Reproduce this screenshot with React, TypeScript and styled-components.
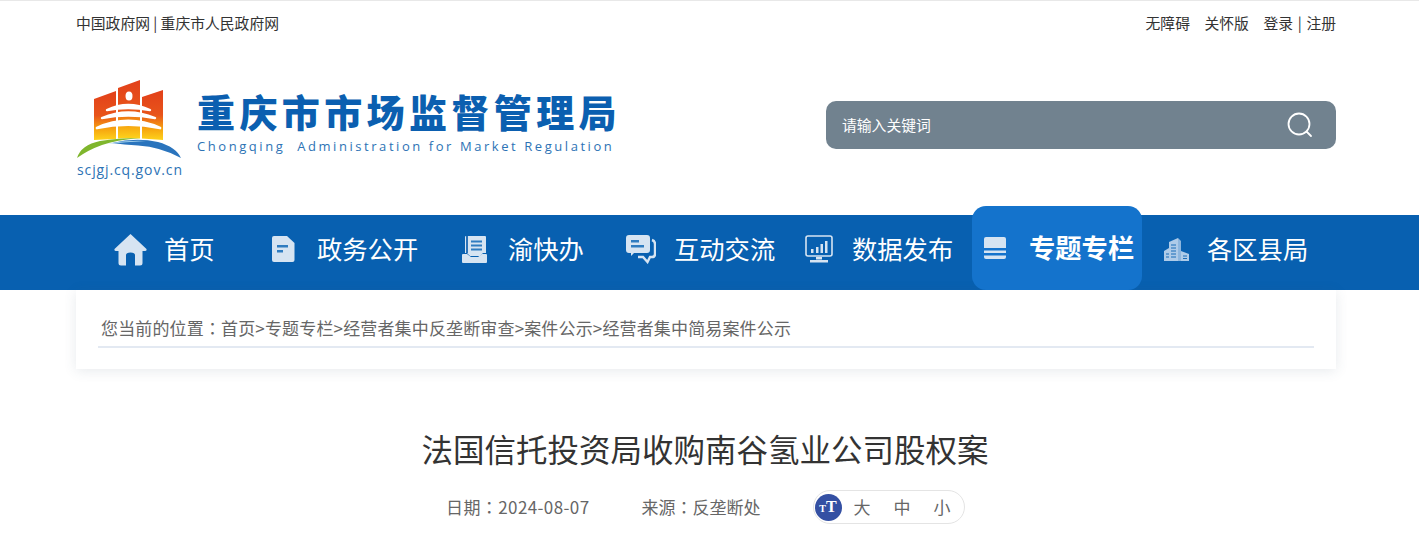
import React from "react";
import styled, { createGlobalStyle } from "styled-components";

const FONT = `"Noto Sans CJK SC", "Noto Sans", "Liberation Sans", sans-serif`;
const ICON = "#d6e4f2";

const GlobalStyle = createGlobalStyle`
  html, body {
    margin: 0;
    padding: 0;
    background: #fff;
    font-family: ${FONT};
    overflow: hidden;
  }
  * { box-sizing: border-box; }
`;

const HomeIcon = () => (
  <svg width="33" height="33" viewBox="0 0 33 33">
    <path
      d="M16.5 1 L32.5 16 Q33 18 31 18 H28.5 V30 Q28.5 32.5 26 32.5 H21 V22 Q21 19.5 16.5 19.5 Q12 19.5 12 22 V32.5 H7 Q4.5 32.5 4.5 30 V18 H2 Q0 18 .5 16 Z"
      fill={ICON}
    />
  </svg>
);

const DocIcon = () => (
  <svg width="23" height="26" viewBox="0 0 23 26">
    <path d="M2 0 H15 L22.5 7 V24 Q22.5 26 20.500 26 H2 Q0 26 0 24 V2 Q0 0 2 0 Z" fill={ICON} />
    <path d="M5 9 H16 V11.500 H5 Z M5 14 H11 V16.500 H5 Z" fill="#2f7cc0" />
  </svg>
);

const ServiceIcon = () => (
  <svg width="25" height="27" viewBox="0 0 25 27">
    <path d="M3 1 Q3 0 4 0 H23 Q24 0 24 1 V17 H21 L18 20 H8 L5 17 H3 Z" fill={ICON} />
    <path d="M6 0 V17 H4 V0 Z" fill="#2a72b8" />
    <path d="M9 4.500 H20 V6.500 H9 Z M9 8.500 H20 V10.500 H9 Z M9 12.500 H20 V14.500 H9 Z" fill="#2f7cc0" />
    <path d="M1 18 H5 L9 21 H16 L20 18 H24 Q25 18 25 19 V26 Q25 27 24 27 H1 Q0 27 0 26 V19 Q0 18 1 18 Z" fill={ICON} />
  </svg>
);

const ChatIcon = () => (
  <svg width="30" height="29" viewBox="0 0 30 29">
    <path d="M3 0 H21 Q24 0 24 3 V15 Q24 18 21 18 H8 L5 21 V18 H3 Q0 18 0 15 V3 Q0 0 3 0 Z" fill={ICON} />
    <path d="M5 5 H13 V7.500 H5 Z M5 10 H18 V12.500 H5 Z" fill="#2f7cc0" />
    <path
      d="M26 5 Q29 6 29 9 V19 Q29 22 26 22 H24 L21.500 27 L17 22 H12"
      fill="none"
      stroke={ICON}
      strokeWidth="2.400"
    />
  </svg>
);

const ChartIcon = () => (
  <svg width="28" height="28" viewBox="0 0 28 28">
    <rect x="1" y="1" width="26" height="20" rx="2" fill="none" stroke={ICON} strokeWidth="1.600" />
    <path d="M6 14 H8.500 V18 H6 Z M11 12 H13.500 V18 H11 Z M15.500 9 H18 V18 H15.500 Z M20 6 H22.500 V18 H20 Z" fill={ICON} />
    <path d="M11 22 H17 V24.500 H11 Z M5 25 H23 V27.500 H5 Z" fill={ICON} />
  </svg>
);

const StackIcon = () => (
  <svg width="22" height="22" viewBox="0 0 22 22">
    <path d="M2 0 H20 Q22 0 22 2 V11 H0 V2 Q0 0 2 0 Z" fill={ICON} />
    <path d="M0 13.500 H22 V16 H0 Z" fill={ICON} />
    <path d="M0 18.500 H22 V20 Q22 22 20 22 H2 Q0 22 0 20 Z" fill={ICON} />
  </svg>
);

const BuildingIcon = () => (
  <svg width="25" height="23" viewBox="0 0 25 23">
    <path d="M0 23 V13 L5 10 V4 L14 0 V23 Z" fill="#aecbe8" />
    <path d="M14 0 L17 3 V23 H14 Z" fill="#8db6de" />
    <path d="M17 13 L25 16 V23 H17 Z" fill="#aecbe8" />
    <path d="M7 7 H12 M7 10 H12 M7 13 H12 M7 16 H12 M7 19 H12 M2 16 H5 M2 19 H5 M19 18 H23 M19 20.500 H23" stroke="#0a62b2" strokeWidth=".9" />
  </svg>
);

const Emblem = () => (
  <svg width="107" height="80" viewBox="0 0 107 80">
    <defs>
      <linearGradient id="wall" x1="0" y1="0" x2="0" y2="1">
        <stop offset="0" stopColor="#e2401a" />
        <stop offset=".5" stopColor="#e8541a" />
        <stop offset=".78" stopColor="#f7a50f" />
        <stop offset="1" stopColor="#fdd31c" />
      </linearGradient>
    </defs>
    <path d="M18 19 L40 11 V59 Q28 59.500 18 60 Z" fill="url(#wall)" />
    <path d="M42 8 L64 0 V58.500 Q53 58 42 58.500 Z" fill="url(#wall)" />
    <path d="M66 17 L87 10 V60 Q76 59 66 58.500 Z" fill="url(#wall)" />
    <ellipse cx="53" cy="16" rx="3.500" ry="4.500" fill="#fff" />
    <path d="M31 30 Q52 20 74 30 Q52 26 31 30 Z" fill="#fff" stroke="#fff" strokeWidth="2.400" strokeLinejoin="round" />
    <path d="M26 38 Q52 27 79 38 Q52 33 26 38 Z" fill="#fff" stroke="#fff" strokeWidth="2.400" strokeLinejoin="round" />
    <path d="M21 48 Q52 34 84 48 Q52 41 21 48 Z" fill="#fff" stroke="#fff" strokeWidth="2.800" strokeLinejoin="round" />
    <path d="M1 78 Q5 65 24 61 Q42 58 64 58 Q40 60 26 65 Q12 70 1 78 Z" fill="#7fb62d" />
    <path d="M36 63 Q60 57 82 62 Q100 67 105 78 Q85 67 62 65.500 Q48 64.500 36 63 Z" fill="#2a74bd" />
    <path d="M30 64 Q50 60 70 61 Q50 62 30 64 Z" fill="#a9d6ee" />
  </svg>
);

const SearchIcon = () => (
  <svg width="26" height="26" viewBox="0 0 26 26" fill="none" stroke="#fff" strokeWidth="1.800">
    <circle cx="12" cy="12" r="10.500" />
    <path d="M19.500 19.500 L24 24" strokeLinecap="round" />
  </svg>
);

const navItems = [
  { label: "首页", icon: <HomeIcon />, width: 158, gap: 17 },
  { label: "政务公开", icon: <DocIcon />, width: 190, gap: 22 },
  { label: "渝快办", icon: <ServiceIcon />, width: 164, gap: 21 },
  { label: "互动交流", icon: <ChatIcon />, width: 179, gap: 18 },
  { label: "数据发布", icon: <ChartIcon />, width: 167, gap: 19 },
  { label: "专题专栏", icon: <StackIcon />, width: 170, gap: 23, active: true },
  { label: "各区县局", icon: <BuildingIcon />, width: 170, gap: 18 },
];

export default function App() {
  return (
    <Page>
      <GlobalStyle />
      <Container>
        <TopBar>
          <span>中国政府网 | 重庆市人民政府网</span>
          <TopLinks>
            <span>无障碍</span>
            <span>关怀版</span>
            <LoginLink>登录 | 注册</LoginLink>
          </TopLinks>
        </TopBar>
        <Header>
          <Logo>
            <EmblemBox>
              <Emblem />
              <Domain>scjgj.cq.gov.cn</Domain>
            </EmblemBox>
            <LogoName>
              <LogoTitle>重庆市市场监督管理局</LogoTitle>
              <LogoEnglish>Chongqing&nbsp; Administration for Market Regulation</LogoEnglish>
            </LogoName>
          </Logo>
          <SearchBox>
            <SearchHint>请输入关键词</SearchHint>
            <SearchIcon />
          </SearchBox>
        </Header>
      </Container>
      <Nav>
        <NavInner>
          {navItems.map((item) => (
            <NavItem key={item.label} $width={item.width} $gap={item.gap} $active={item.active}>
              <NavIconBox>{item.icon}</NavIconBox>
              <span>{item.label}</span>
            </NavItem>
          ))}
        </NavInner>
      </Nav>
      <Container>
        <CrumbCard>
          <CrumbLine>
            您当前的位置<Colon>：</Colon>首页&gt;专题专栏&gt;经营者集中反垄断审查&gt;案件公示&gt;经营者集中简易案件公示
          </CrumbLine>
        </CrumbCard>
        <Title>法国信托投资局收购南谷氢业公司股权案</Title>
        <Meta>
          <MetaDate>日期<Colon>：</Colon>2024-08-07</MetaDate>
          <MetaSource>来源<Colon>：</Colon>反垄断处</MetaSource>
          <SizePill>
            <SizeBadge>
              <SmallT>T</SmallT>
              <BigT>T</BigT>
            </SizeBadge>
            <SizeOption>大</SizeOption>
            <SizeOption>中</SizeOption>
            <SizeOption>小</SizeOption>
          </SizePill>
        </Meta>
      </Container>
    </Page>
  );
}

const Page = styled.div`
  width: 100%;
  min-height: 542px;
  border-top: 1px solid #e8e8e8;
`;

const Container = styled.div`
  width: 1260px;
  margin-left: 76px;
`;

const TopBar = styled.div`
  height: 42px;
  display: flex;
  justify-content: space-between;
  align-items: center;
  font-size: 14.8px;
  color: #333;
`;

const TopLinks = styled.div`
  display: flex;
  gap: 14.5px;
`;

const LoginLink = styled.span`
  word-spacing: 1.4px;
`;

const Header = styled.div`
  height: 172px;
  display: flex;
  justify-content: space-between;
  align-items: flex-start;
`;

const Logo = styled.div`
  display: flex;
  align-items: flex-start;
  gap: 14px;
  padding-top: 37px;
`;

const EmblemBox = styled.div`
  width: 107px;
  display: flex;
  flex-direction: column;
`;

const Domain = styled.div`
  font-family: "Open Sans", "Liberation Sans", sans-serif;
  font-size: 14px;
  line-height: 18px;
  letter-spacing: 0.88px;
  color: #2d73b5;
  margin-top: 1px;
  margin-left: 1px;
  white-space: nowrap;
`;

const LogoName = styled.div`
  padding-top: 11px;
`;

const LogoTitle = styled.div`
  font-size: 38px;
  line-height: 40px;
  font-weight: 900;
  letter-spacing: 4.4px;
  color: #0b5fb0;
  white-space: nowrap;
`;

const LogoEnglish = styled.div`
  font-family: "Open Sans", "Liberation Sans", sans-serif;
  font-size: 13px;
  line-height: 18px;
  letter-spacing: 2.56px;
  color: #2d73b5;
  margin-top: 6px;
  white-space: nowrap;
`;

const SearchBox = styled.div`
  width: 510px;
  height: 48px;
  margin-top: 58px;
  padding: 0 23px 0 16px;
  display: flex;
  justify-content: space-between;
  align-items: center;
  background: #71828f;
  border-radius: 10px;
`;

const SearchHint = styled.span`
  font-size: 14.8px;
  color: #fff;
  margin-top: -2px;
`;

const Nav = styled.nav`
  height: 75px;
  background: #0860b0;
`;

const NavInner = styled.div`
  height: 100%;
  margin-left: 114px;
  display: flex;
`;

const NavItem = styled.div<{ $width: number; $gap: number; $active?: boolean }>`
  width: ${(p) => p.$width}px;
  display: flex;
  align-items: center;
  gap: ${(p) => p.$gap}px;
  font-size: 25.3px;
  line-height: 36px;
  color: #fff;
  white-space: nowrap;
  padding-bottom: 7px;
  ${(p) =>
    p.$active &&
    `
    margin-top: -9px;
    margin-right: 22px;
    height: 84px;
    padding-left: 12px;
    padding-bottom: 1px;
    background: #1473cc;
    border-radius: 14px;
    font-size: 26.300px;
    font-weight: 700;
  `}

  & > span:last-child {
    margin-top: -2px;
  }
`;

const NavIconBox = styled.span`
  display: flex;
`;

const CrumbCard = styled.div`
  height: 79px;
  padding: 0 22px;
  background: #fff;
  box-shadow: 0 2px 12px rgba(60, 80, 110, 0.12);
`;

const CrumbLine = styled.div`
  height: 58px;
  padding: 23px 0 0 3px;
  border-bottom: 2px solid #e3e9f2;
  font-size: 17px;
  line-height: 30px;
  letter-spacing: 0.15px;
  color: #666;
  white-space: nowrap;
`;

const Colon = styled.span`
  font-family: "Noto Sans CJK TC", "Noto Sans CJK SC", sans-serif;
`;

const Title = styled.h1`
  margin: 55px 0 0;
  padding-right: 2px;
  font-size: 31.5px;
  line-height: 48px;
  font-weight: 400;
  color: #333;
  text-align: center;
`;

const Meta = styled.div`
  margin-top: 18px;
  margin-left: 370px;
  height: 34px;
  display: flex;
  align-items: center;
  font-size: 17px;
  line-height: 32px;
  color: #666;
  white-space: nowrap;
`;

const MetaDate = styled.span`
  letter-spacing: 0.4px;
`;

const MetaSource = styled.span`
  margin-left: 52px;
`;

const SizePill = styled.div`
  width: 152px;
  height: 34px;
  margin-left: 52px;
  padding-left: 1px;
  display: flex;
  align-items: center;
  border: 1px solid #e4e4e4;
  border-radius: 17px;
`;

const SizeBadge = styled.div`
  width: 27px;
  height: 27px;
  margin-right: 12px;
  display: flex;
  align-items: center;
  justify-content: center;
  border-radius: 50%;
  background: #3450a3;
  color: #fff;
  font-family: "Liberation Serif", serif;
  font-weight: 700;
`;

const SmallT = styled.span`
  font-size: 10px;
  line-height: 1;
  margin-top: 4px;
`;

const BigT = styled.span`
  font-size: 16px;
  line-height: 1;
`;

const SizeOption = styled.span`
  flex: none;
  width: 17px;
  font-size: 17px;
  & + & {
    margin-left: 23px;
  }
`;
